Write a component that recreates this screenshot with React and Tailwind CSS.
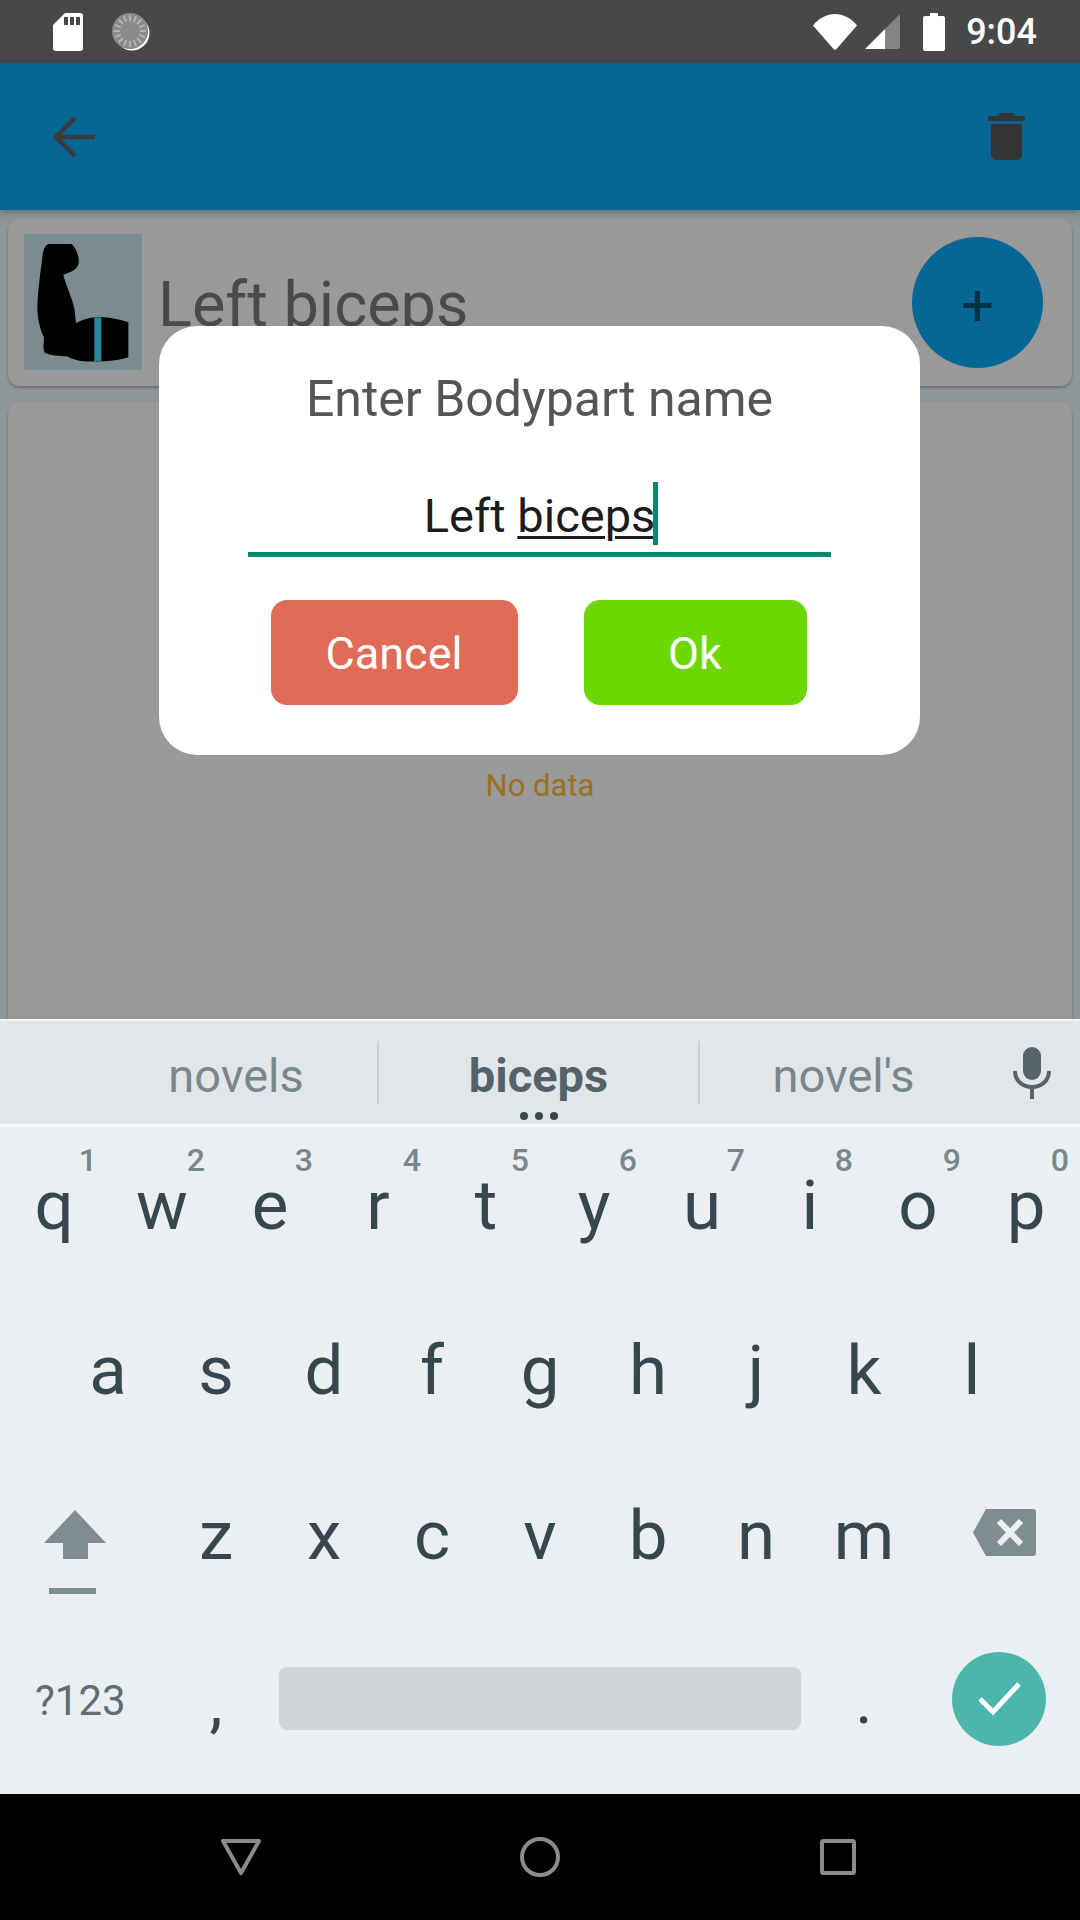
const rows = [
  ['q', 'w', 'e', 'r', 't', 'y', 'u', 'i', 'o', 'p'],
  ['a', 's', 'd', 'f', 'g', 'h', 'j', 'k', 'l'],
  ['z', 'x', 'c', 'v', 'b', 'n', 'm'],
];
const digits = ['1', '2', '3', '4', '5', '6', '7', '8', '9', '0'];

const SdCard = () => (
  <svg width="30" height="38" viewBox="0 0 30 38" className="ml-[53px]">
    <path fill="#fff" d="M12 0H27a3 3 0 0 1 3 3V35a3 3 0 0 1-3 3H3a3 3 0 0 1-3-3V12Z" />
    <path fill="#484848" d="M11 4h4v8h-4zM17 4h4v8h-4zM23 4h4v8h-4z" />
  </svg>
);

const SyncDial = () => (
  <svg width="38" height="38" viewBox="0 0 38 38" className="ml-[29px]">
    <circle cx="20" cy="20" r="17.5" fill="#fff" />
    <circle cx="18" cy="18" r="18" fill="#8a8a8a" />
    {Array.from({ length: 16 }).map((_, i) => (
      <rect key={i} x="17.2" y="2" width="1.6" height="6" fill="#bdbdbd" transform={`rotate(${i * 22.5} 18 18)`} />
    ))}
  </svg>
);

const Wifi = () => (
  <svg width="44" height="36" viewBox="0 0 44 36">
    <path fill="#fff" d="M0 11.5C6 4 14 0 22 0s16 4 22 11.5L23.5 35a2 2 0 0 1-3 0Z" />
  </svg>
);

const Signal = () => (
  <svg width="35" height="35" viewBox="0 0 35 35" className="ml-[8px]">
    <path fill="#fff" d="M0 35 20 15V35Z" />
    <path fill="#848484" d="M20 15 35 0V33a2 2 0 0 1-2 2H20Z" />
  </svg>
);

const Battery = () => (
  <svg width="22" height="38" viewBox="0 0 22 38" className="ml-[23px]">
    <path fill="#fff" d="M7 0h8v3h5a2 2 0 0 1 2 2V36a2 2 0 0 1-2 2H2a2 2 0 0 1-2-2V5a2 2 0 0 1 2-2h5Z" />
  </svg>
);

const BackArrow = () => (
  <svg width="42" height="42" viewBox="0 0 42 42" fill="none" stroke="#3b3b3b" strokeWidth="4.5">
    <path d="M42 21H4M22 2 3 21l19 19" />
  </svg>
);

const Trash = () => (
  <svg width="37" height="47" viewBox="0 0 37 47" fill="#353535">
    <path d="M12 0h13l2 3h10v5H0V3h10ZM3 11h31v31a5 5 0 0 1-5 5H8a5 5 0 0 1-5-5Z" />
  </svg>
);

const ArmPicture = () => (
  <svg width="118" height="136" viewBox="72 70 354 408" className="bg-[#7a8b92] shrink-0">
    <path
      fill="#000"
      d="M145 100H215C228 112 238 135 236 158C232 176 212 186 190 192C198 225 218 262 224 300L228 338C250 325 270 320 300 319C330 320 360 326 385 335V440C350 452 300 454 250 452C230 450 210 442 200 437C180 436 150 436 133 425C128 410 132 395 132 380C118 350 112 320 112 285C114 240 120 190 126 150C128 125 132 105 145 100Z"
    />
    <rect x="283" y="320" width="21" height="132" fill="#25899c" />
  </svg>
);

const Mic = () => (
  <svg width="38" height="52" viewBox="0 0 38 52" fill="none">
    <rect x="10" y="0" width="18" height="33" rx="9" fill="#566369" />
    <path d="M2 24c0 10 8 16 17 16s17-6 17-16M19 40v12" stroke="#566369" strokeWidth="4" />
  </svg>
);

const Shift = () => (
  <svg width="62" height="84" viewBox="0 0 62 84" fill="#7f8c92">
    <path d="M31 0 62 33H44V49H19V33H0Z" />
    <rect x="5" y="78" width="47" height="6" />
  </svg>
);

const Backspace = () => (
  <svg width="63" height="47" viewBox="0 0 63 47">
    <path fill="#7f8c92" d="M13 0H60a3 3 0 0 1 3 3V44a3 3 0 0 1-3 3H13L0 23.5Z" />
    <path d="M26 12 48 35M48 12 26 35" stroke="#eceff2" strokeWidth="6" />
  </svg>
);

const Check = () => (
  <svg width="44" height="36" viewBox="0 0 44 36" fill="none" stroke="#fff" strokeWidth="5">
    <path d="M3 18 16 31 42 3" />
  </svg>
);

const Key = ({ label, digit }) => (
  <div className="relative w-[108px] h-full flex items-center justify-center shrink-0">
    {digit && (
      <span className="absolute top-[14px] right-[11px] text-[32px] leading-[38px] font-medium text-[#78868d]">
        {digit}
      </span>
    )}
    <span className="text-[69px] leading-[80px] pb-[10px] text-[#37474f]">{label}</span>
  </div>
);

export default function App() {
  return (
    <div
      className="relative w-[1080px] h-[1920px] flex flex-col overflow-hidden"
      style={{ fontFamily: 'Roboto, sans-serif' }}
    >
      {/* Status bar */}
      <div className="h-[63px] bg-[#484848] flex items-center shrink-0">
        <SdCard />
        <SyncDial />
        <div className="ml-auto flex items-center">
          <Wifi />
          <Signal />
          <Battery />
          <span className="ml-[21px] mr-[43px] text-[36px] font-medium text-white">9:04</span>
        </div>
      </div>

      {/* App bar */}
      <div className="relative z-10 h-[147px] bg-[#066794] shadow-[0_3px_6px_rgba(0,0,0,0.25)] flex items-center justify-between pl-[53px] pr-[55px] shrink-0">
        <BackArrow />
        <Trash />
      </div>

      {/* Content */}
      <div className="flex-1 min-h-0 overflow-hidden bg-[#8e9697] px-[8px] pt-[8px] flex flex-col gap-[16px]">
        <div className="h-[168px] shrink-0 rounded-[12px] bg-[#999999] shadow-[0_2px_3px_rgba(0,0,0,0.25)] flex items-center pl-[16px] pr-[29px]">
          <ArmPicture />
          <span className="ml-[16px] text-[63px] text-[#4a4a4a] leading-none mt-[4px]">Left biceps</span>
          <div className="ml-auto w-[131px] h-[131px] rounded-full bg-[#066794] flex items-center justify-center text-[58px] leading-none pt-[6px] text-[#02324a]">
            +
          </div>
        </div>
        <div className="flex-1 rounded-t-[12px] bg-[#999999] shadow-[0_2px_3px_rgba(0,0,0,0.25)] pt-[365px] text-center text-[31px] leading-[38px] text-[#9a7020]">
          No data
        </div>
      </div>

      {/* Dialog */}
      <div className="absolute left-[159px] top-[326px] w-[761px] h-[429px] bg-white rounded-[38px] flex flex-col items-center">
        <div className="mt-[45px] text-[50px] leading-[56px] text-[#555555]">Enter Bodypart name</div>
        <div className="mt-[62px] w-[583px] h-[68px] border-b-[5px] border-[#08866f] text-center text-[47px] leading-[54px] text-[#1c1c1c]">
          Left{' '}
          <span className="relative underline decoration-[3px] underline-offset-[4px]">
            biceps
            <span className="absolute right-[-3px] top-[-6px] w-[5px] h-[63px] bg-[#08866f]" />
          </span>
        </div>
        <div className="mt-[43px] mr-[2px] flex gap-[66px]">
          <div className="w-[247px] h-[105px] rounded-[16px] bg-[#e06c58] flex items-center justify-center pt-[2px] text-[45px] text-white">
            Cancel
          </div>
          <div className="w-[223px] h-[105px] rounded-[16px] bg-[#6cd703] flex items-center justify-center pt-[2px] text-[45px] text-white">
            Ok
          </div>
        </div>
      </div>

      {/* Keyboard */}
      <div className="h-[775px] shrink-0 bg-[#eceff2] border-t-[2px] border-[#f5f7f8] flex flex-col">
        <div className="relative h-[103px] bg-[#e2e6e9] flex items-center pl-[95px] shrink-0">
          <div className="w-[284px] h-[63px] border-r-[2px] border-[#ccd0d3] flex items-center justify-center pt-[8px] text-[47px] text-[#78868d]">
            novels
          </div>
          <div className="w-[321px] h-[63px] border-r-[2px] border-[#ccd0d3] flex items-center justify-center pt-[8px] text-[47px] font-bold text-[#546269]">
            biceps
          </div>
          <div className="w-[287px] h-[63px] flex items-center justify-center pt-[8px] text-[47px] text-[#78868d]">
            novel's
          </div>
          <div className="flex-1 flex justify-center pr-[4px]">
            <Mic />
          </div>
          <div className="absolute left-[520px] bottom-[4px] flex gap-[7px]">
            <span className="w-[8px] h-[8px] rounded-full bg-[#37474f]" />
            <span className="w-[8px] h-[8px] rounded-full bg-[#37474f]" />
            <span className="w-[8px] h-[8px] rounded-full bg-[#37474f]" />
          </div>
        </div>
        <div className="h-[3px] bg-[#f5f7f8] shrink-0" />

        <div className="flex-1 flex flex-col pb-[20px]">
          <div className="h-[167px] flex">
            {rows[0].map((k, i) => (
              <Key key={k} label={k} digit={digits[i]} />
            ))}
          </div>
          <div className="h-[164px] flex pl-[54px]">
            {rows[1].map((k) => (
              <Key key={k} label={k} />
            ))}
          </div>
          <div className="h-[165px] flex">
            <div className="w-[162px] flex justify-start pl-[44px] pt-[52px]">
              <Shift />
            </div>
            {rows[2].map((k) => (
              <Key key={k} label={k} />
            ))}
            <div className="flex-1 pl-[55px] pt-[51px]">
              <Backspace />
            </div>
          </div>
          <div className="flex-1 flex items-center">
            <div className="w-[162px] pl-[35px] pt-[4px] text-[42px] text-[#5f6d74]">?123</div>
            <div className="w-[108px] text-center pt-[8px] text-[66px] leading-[60px] text-[#37474f]">,</div>
            <div className="w-[540px] px-[9px]">
              <div className="h-[63px] rounded-[8px] bg-[#d1d5d8]" />
            </div>
            <div className="w-[108px] text-center pt-[4px] text-[66px] leading-[60px] text-[#37474f]">.</div>
            <div className="flex-1 flex justify-center">
              <div className="w-[94px] h-[94px] rounded-full bg-[#4db6ac] flex items-center justify-center">
                <Check />
              </div>
            </div>
          </div>
        </div>
      </div>

      {/* Nav bar */}
      <div className="h-[126px] bg-black shrink-0 flex items-center pl-[221px]">
        <svg width="40" height="36" viewBox="0 0 40 36" fill="none" stroke="#8b8b8b" strokeWidth="4" strokeLinejoin="round">
          <path d="M2 2H38L20 34Z" />
        </svg>
        <svg width="40" height="40" viewBox="0 0 40 40" fill="none" stroke="#8b8b8b" strokeWidth="4" className="ml-[259px]">
          <circle cx="20" cy="20" r="18" />
        </svg>
        <svg width="36" height="36" viewBox="0 0 36 36" fill="none" stroke="#8b8b8b" strokeWidth="4" className="ml-[260px]">
          <rect x="2" y="2" width="32" height="32" rx="1.5" />
        </svg>
      </div>
    </div>
  );
}
